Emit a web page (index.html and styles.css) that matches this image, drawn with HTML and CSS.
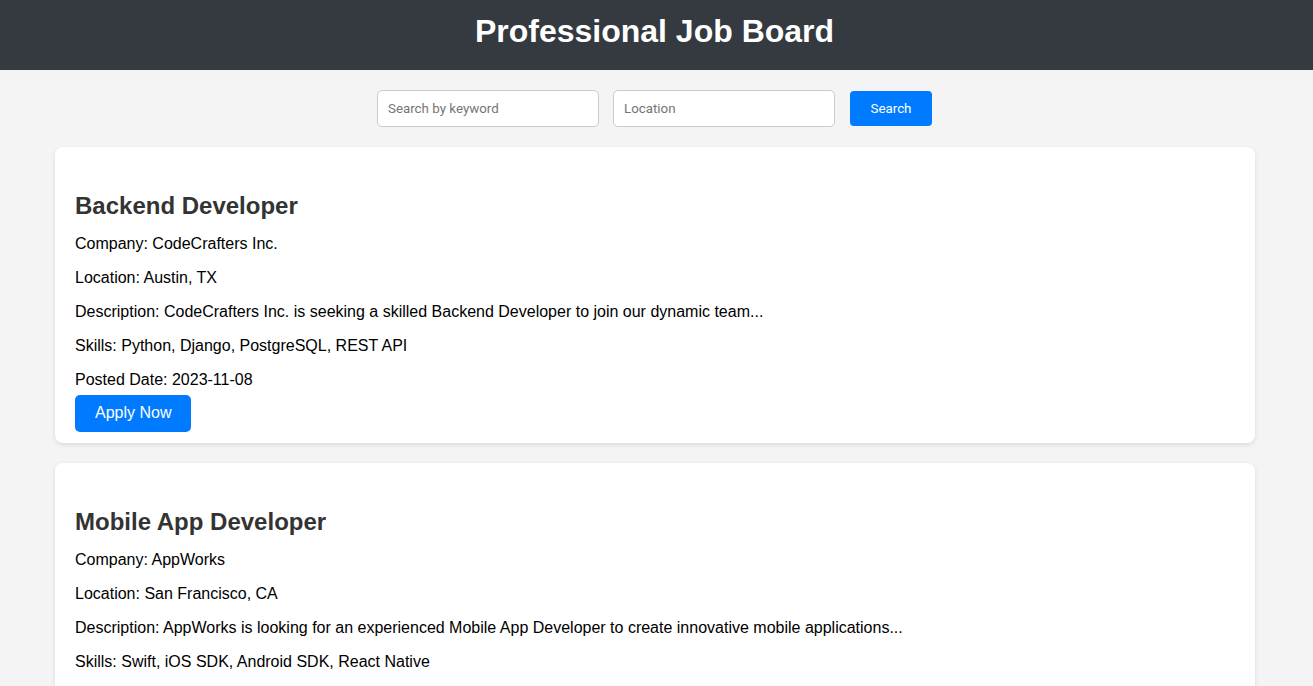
FILE: index.html
```html
<!DOCTYPE html>
<html lang="en">
<head>
<meta charset="utf-8">
<title>Professional Job Board</title>
<link rel="stylesheet" href="styles.css">
</head>
<body>
<header class="site-header">
  <h1 class="site-title">Professional Job Board</h1>
</header>
<section class="search-bar">
  <input class="search-input" type="text" placeholder="Search by keyword">
  <input class="search-input" type="text" placeholder="Location">
  <button class="search-btn" type="button">Search</button>
</section>
<main class="job-list">
  <article class="job-card">
    <h2 class="job-title">Backend Developer</h2>
    <p>Company: CodeCrafters Inc.</p>
    <p>Location: Austin, TX</p>
    <p>Description: CodeCrafters Inc. is seeking a skilled Backend Developer to join our dynamic team...</p>
    <p>Skills: Python, Django, PostgreSQL, REST API</p>
    <p>Posted Date: 2023-11-08</p>
    <button class="apply-btn" type="button">Apply Now</button>
  </article>
  <article class="job-card">
    <h2 class="job-title">Mobile App Developer</h2>
    <p>Company: AppWorks</p>
    <p>Location: San Francisco, CA</p>
    <p>Description: AppWorks is looking for an experienced Mobile App Developer to create innovative mobile applications...</p>
    <p>Skills: Swift, iOS SDK, Android SDK, React Native</p>
    <p>Posted Date: 2023-11-05</p>
    <button class="apply-btn" type="button">Apply Now</button>
  </article>
</main>
</body>
</html>
```
FILE: styles.css
```css
* { box-sizing: border-box; }

body {
  margin: 0;
  background: #f4f4f4;
  font-family: "Liberation Sans", Arial, sans-serif;
  color: #000;
}

.site-header {
  background: #343a40;
  color: #fff;
  text-align: center;
  padding: 13px 4px 20px 0;
}

.site-title {
  margin: 0;
  font-size: 32px;
  font-weight: bold;
  line-height: 36.8px;
}

.search-bar {
  display: flex;
  justify-content: center;
  align-items: center;
  gap: 14px;
  padding: 20px 0;
}

.search-input {
  width: 222px;
  height: 37px;
  padding: 0 10px;
  border: 1px solid #ccc;
  border-radius: 5px;
  background: #fff;
  font-family: Roboto, "Liberation Sans", sans-serif;
  font-size: 13.33px;
  color: #222;
}

.search-input::placeholder { color: #757575; }

.search-btn {
  margin-left: 1px;
  margin-right: 4px;
  width: 82px;
  height: 35px;
  padding: 0;
  border: 0;
  border-radius: 4px;
  background: #007bff;
  color: #fff;
  font-family: Roboto, "Liberation Sans", sans-serif;
  font-size: 13.33px;
}

.job-list {
  max-width: 1203px;
  margin: 0 auto;
  padding-right: 3px;
}

.job-card {
  background: #fff;
  border-radius: 8px;
  box-shadow: 0 2px 5px rgba(0, 0, 0, 0.1);
  padding: 20px 20px 11px;
  margin-bottom: 20px;
}

.job-title {
  margin: 25px 0 16px;
  font-size: 24px;
  font-weight: bold;
  line-height: 27.6px;
  color: #333;
}

.job-card p {
  margin: 15px 0 16px;
  font-size: 16px;
  line-height: 18px;
}

.job-card p:last-of-type { margin-bottom: 6px; }

.apply-btn {
  display: block;
  padding: 9px 20px;
  border: 0;
  border-radius: 5px;
  background: #007bff;
  color: #fff;
  font-family: "Liberation Sans", Arial, sans-serif;
  font-size: 16px;
  line-height: 18.4px;
}
```
